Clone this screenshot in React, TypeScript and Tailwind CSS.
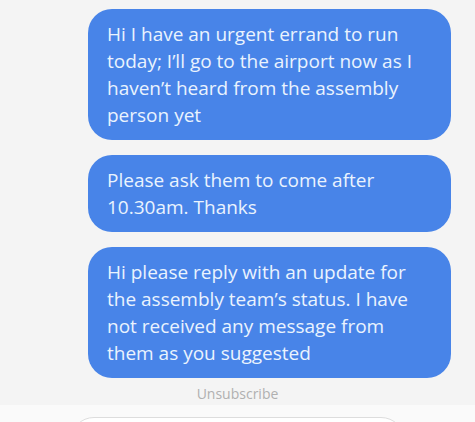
const messages = [
  "Hi I have an urgent errand to run today; I’ll go to the airport now as I haven’t heard from the assembly person yet",
  "Please ask them to come after 10.30am. Thanks",
  "Hi please reply with an update for the assembly team’s status. I have not received any message from them as you suggested",
];

const Bubble: React.FC<{ text: string }> = ({ text }) => (
  <li className="rounded-[24px] bg-[#4884e8] px-[19px] pt-3 pb-[11px] text-[19px] leading-[27px] text-[#eaf3fe]">
    {text}
  </li>
);

const App: React.FC = () => {
  return (
    <div className="flex h-screen flex-col overflow-hidden bg-[#f4f4f4] font-['Open_Sans',sans-serif]">
      <main className="shrink-0 pt-[9px] pr-6 pl-[88px]">
        <ul className="flex flex-col gap-[15px]">
          {messages.map((text) => (
            <Bubble key={text} text={text} />
          ))}
        </ul>
      </main>

      <div className="flex shrink-0 justify-center pt-[5px]">
        <a
          href="#unsubscribe"
          className="text-sm leading-[22px] text-[#b0b0b0]"
        >
          Unsubscribe
        </a>
      </div>

      {/* message composer */}
      <footer className="min-h-0 flex-1 overflow-hidden bg-[#fafafa] px-[70px] pt-3">
        <input
          type="text"
          aria-label="Message"
          className="block h-12 w-full rounded-full border border-[#dddddd] bg-white px-5 outline-none"
        />
      </footer>
    </div>
  );
};

export default App;
